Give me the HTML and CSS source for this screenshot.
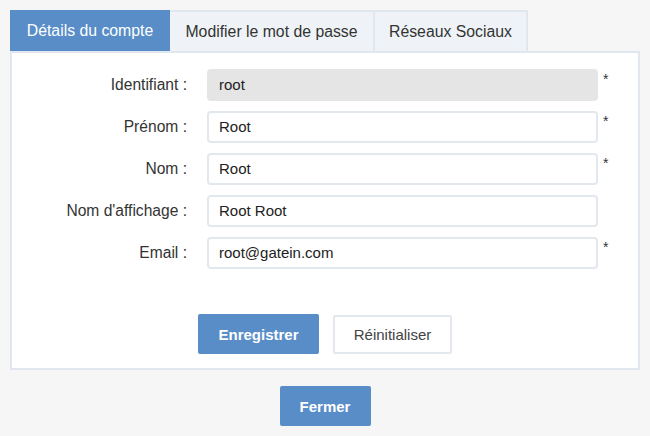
FILE: index.html
```html
<!DOCTYPE html>
<html lang="fr">
<head>
<meta charset="utf-8">
<link rel="stylesheet" href="styles.css">
</head>
<body>
<div class="window">
  <div class="tabs">
    <div class="tab active">Détails du compte</div>
    <div class="tab">Modifier le mot de passe</div>
    <div class="tab">Réseaux Sociaux</div>
  </div>
  <div class="panel">
    <div class="form">
      <div class="row">
        <label class="label">Identifiant :</label>
        <div class="input readonly">root</div>
        <span class="req">*</span>
      </div>
      <div class="row">
        <label class="label">Prénom :</label>
        <div class="input">Root</div>
        <span class="req">*</span>
      </div>
      <div class="row">
        <label class="label">Nom :</label>
        <div class="input">Root</div>
        <span class="req">*</span>
      </div>
      <div class="row">
        <label class="label">Nom d'affichage :</label>
        <div class="input">Root Root</div>
        <span class="req"></span>
      </div>
      <div class="row">
        <label class="label">Email :</label>
        <div class="input">root@gatein.com</div>
        <span class="req">*</span>
      </div>
    </div>
    <div class="actions">
      <button class="btn primary save">Enregistrer</button>
      <button class="btn secondary">Réinitialiser</button>
    </div>
  </div>
  <div class="footer">
    <button class="btn primary close">Fermer</button>
  </div>
</div>
</body>
</html>
```
FILE: styles.css
```css
html, body {
  margin: 0;
  padding: 0;
}
body {
  background: #f6f6f6;
  font-family: "Liberation Sans", Arial, sans-serif;
  font-size: 15px;
  color: #333;
  width: 650px;
  height: 436px;
  overflow: hidden;
}
.window {
  padding: 10px 10px 0 10px;
}
.tabs {
  display: flex;
  height: 41px;
}
.tab {
  box-sizing: border-box;
  height: 41px;
  line-height: 39px;
  font-size: 15.8px;
  background: #eff3f7;
  border: 2px solid #e1e7ee;
  border-bottom: none;
  border-left: none;
  color: #333;
  white-space: nowrap;
}
.tab:nth-child(1) { width: 160px; }
.tab:nth-child(2) { width: 205px; text-align: center; }
.tab:nth-child(3) { width: 153px; text-align: center; }
.tab.active {
  background: #588dc8;
  border: none;
  color: #fff;
  text-align: center;
  line-height: 41px;
}
.panel {
  box-sizing: border-box;
  width: 630px;
  height: 319px;
  background: #fff;
  border: 2px solid #e1e7ee;
  padding: 16px 0 0 0;
}
.form {
  display: flex;
  flex-direction: column;
  gap: 10px;
}
.row {
  display: flex;
  align-items: flex-start;
  height: 32px;
}
.label {
  width: 175px;
  text-align: right;
  line-height: 32px;
  font-size: 15.6px;
  margin-right: 20px;
  white-space: nowrap;
}
.input {
  box-sizing: border-box;
  width: 391px;
  height: 32px;
  border: 2px solid #e3e8ee;
  border-radius: 4px;
  padding: 0 10px;
  line-height: 28px;
  color: #222;
  background: #fff;
}
.input.readonly {
  background: #e5e5e5;
  border-color: #e5e5e5;
}
.req {
  margin-left: 5px;
  line-height: 20px;
  font-size: 14px;
  color: #333;
}
.actions {
  display: flex;
  justify-content: center;
  gap: 14px;
  margin-top: 45px;
}
.btn {
  box-sizing: border-box;
  font-family: "Liberation Sans", Arial, sans-serif;
  font-size: 15px;
  height: 40px;
  border-radius: 2px;
  cursor: pointer;
}
.btn.primary {
  background: #588dc8;
  color: #fff;
  font-weight: bold;
  border: none;
}
.btn.save { width: 121px; }
.btn.secondary {
  width: 119px;
  height: 39px;
  margin-top: 1px;
  background: #fff;
  color: #444;
  border: 2px solid #e3e8ee;
}
.footer {
  display: flex;
  justify-content: center;
  padding-top: 16px;
}
.btn.close { width: 91px; }
```
